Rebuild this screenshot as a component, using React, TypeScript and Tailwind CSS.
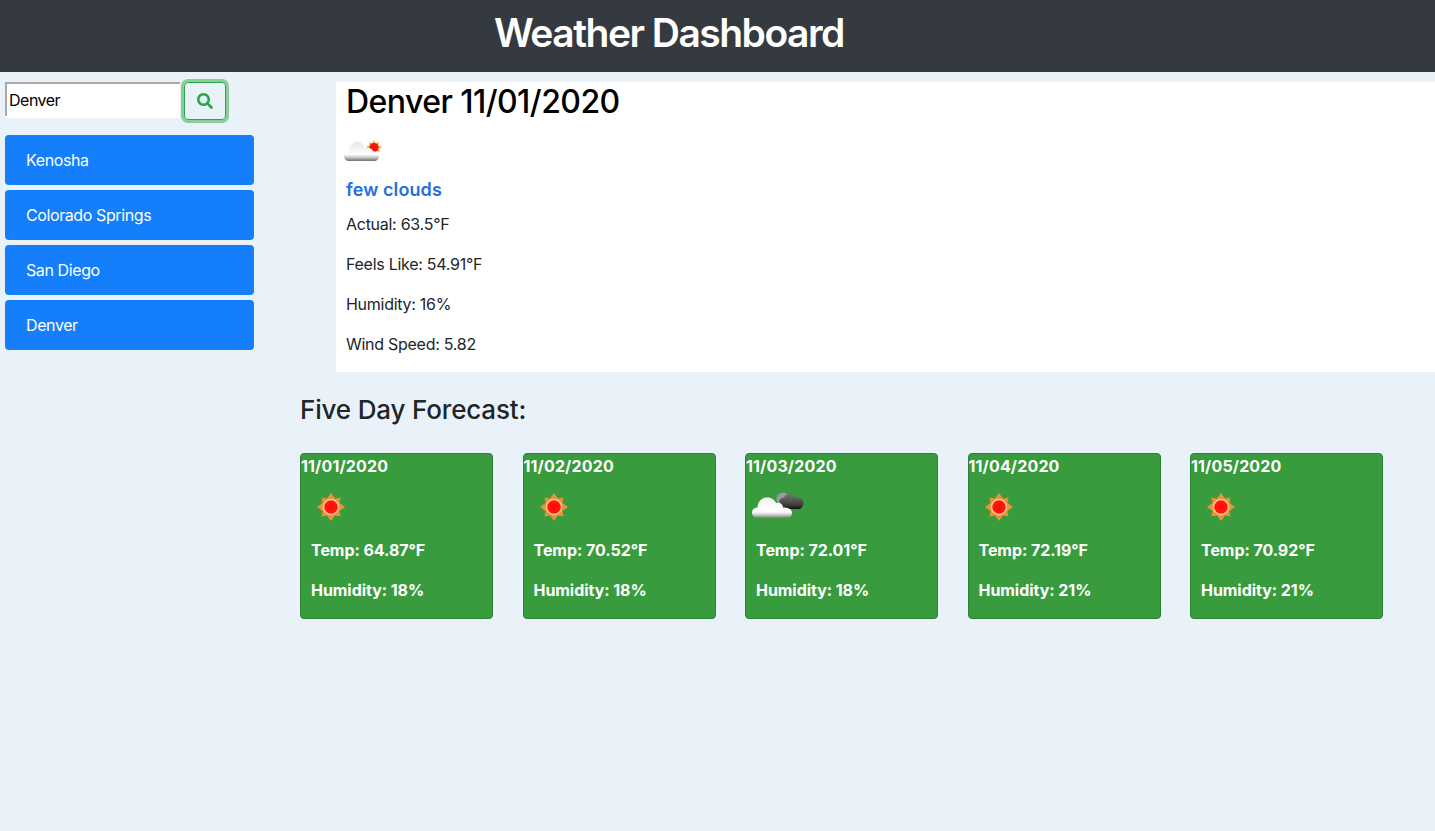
import { FaSearch } from "react-icons/fa";

const cities = ["Kenosha", "Colorado Springs", "San Diego", "Denver"];

const forecast = [
  { date: "11/01/2020", icon: "sun", temp: "64.87", humidity: "18" },
  { date: "11/02/2020", icon: "sun", temp: "70.52", humidity: "18" },
  { date: "11/03/2020", icon: "clouds", temp: "72.01", humidity: "18" },
  { date: "11/04/2020", icon: "sun", temp: "72.19", humidity: "21" },
  { date: "11/05/2020", icon: "sun", temp: "70.92", humidity: "21" },
];

const SunIcon = () => (
  <svg width="30" height="30" viewBox="0 0 30 30">
    <defs>
      <radialGradient id="sun-core" cx="50%" cy="50%" r="50%">
        <stop offset="0%" stopColor="#ff0808" />
        <stop offset="72%" stopColor="#fb1a0c" />
        <stop offset="86%" stopColor="#ffd3a0" />
        <stop offset="100%" stopColor="#f2a04a" />
      </radialGradient>
    </defs>
    <polygon
      fill="#e8923a"
      points="15,1 19,6.500 24.500,5.500 23.500,11 29,15 23.500,19 24.500,24.500 19,23.500 15,29 11,23.500 5.500,24.500 6.500,19 1,15 6.500,11 5.500,5.500 11,6.500"
    />
    <circle cx="15" cy="15" r="8.500" fill="url(#sun-core)" />
  </svg>
);

const FewCloudsIcon = () => (
  <svg width="40" height="28" viewBox="0 0 40 28">
    <defs>
      <linearGradient id="few-cloud" x1="0" y1="0" x2="0" y2="1">
        <stop offset="0%" stopColor="#e6e6e6" />
        <stop offset="65%" stopColor="#ffffff" />
        <stop offset="82%" stopColor="#c4c4c4" />
        <stop offset="100%" stopColor="#6f6f6f" />
      </linearGradient>
    </defs>
    <polygon
      fill="#f79a22"
      points="30,2 31.500,5.500 35,4 34,7.500 38,9 34.500,11 36,14 32,13 30,16 28,13 24,14 25.500,11 22,9 26,7.500 25,4 28.500,5.500"
    />
    <circle cx="30" cy="9.500" r="4.500" fill="#f2170e" />
    <path
      fill="url(#few-cloud)"
      d="M5 23 C1.500 23 0 20.500 0 18 C0 15 2.500 13 5 13 C5.500 8 8.500 4 13 4 C17 4 20 6.500 21.500 10.500 C23 9.500 26 9.500 28 11.500 C29 13 29.500 13.500 30 13.500 C33 13.500 35 16 35 18.500 C35 21 33 23 30 23 Z"
    />
  </svg>
);

const CloudsIcon = () => (
  <svg width="52" height="30" viewBox="0 0 52 30">
    <defs>
      <linearGradient id="dark-cloud" x1="0" y1="0" x2="0" y2="1">
        <stop offset="0%" stopColor="#777777" />
        <stop offset="75%" stopColor="#3b3b3b" />
        <stop offset="100%" stopColor="#111111" />
      </linearGradient>
      <linearGradient id="light-cloud" x1="0" y1="0" x2="0" y2="1">
        <stop offset="0%" stopColor="#f2f2f2" />
        <stop offset="70%" stopColor="#ffffff" />
        <stop offset="86%" stopColor="#c4c4c4" />
        <stop offset="100%" stopColor="#777777" />
      </linearGradient>
    </defs>
    <g transform="translate(0 -5)">
      <circle cx="31" cy="12" r="6.500" fill="#9a9a9a" />
      <path
        fill="url(#dark-cloud)"
        d="M29 19 C26 16 27 11 32 10.500 C34 6 41 5.500 42.500 10 C47 9.500 51.500 12 51.500 15.500 C51.500 19.500 49 22 47 22 L33 22 Z"
      />
    </g>
    <path
      transform="translate(0 -1)"
      fill="url(#light-cloud)"
      d="M6 27 C2 27 0 24.500 0 21.500 C0 18.500 2.500 16.500 5.500 16.500 C6 10 10 6.500 15 6.500 C19 6.500 22.500 8.500 24 12 C25 11.500 26.500 11.500 28 12 C30.500 13 31 15.500 31 16.500 C36 16 40 18 40 22 C40 25 37.500 27 34 27 Z"
    />
  </svg>
);

export default function App() {
  return (
    <div className="min-h-[831px] bg-[#eaf2f9] font-['Inter','Liberation_Sans',sans-serif] text-[16px] text-[#212529]">
      <header className="h-[72px] bg-[#343a40] pl-[494px] pt-[9px]">
        <h1 className="text-[39px] font-semibold leading-[48px] tracking-[-1.5px] text-white">Weather Dashboard</h1>
      </header>

      <div className="flex">
        {/* search and saved cities */}
        <aside className="w-[300px] shrink-0 pl-[5px] pt-[10px]">
          <div className="flex items-start">
            <input
              readOnly
              value="Denver"
              className="h-[34px] w-[175px] border-l-2 border-t-2 border-[#a9a9a9] bg-white pl-[2px] text-[16px] tracking-[-0.5px] text-black shadow-[0_2px_0_0_#ffffff] outline-none"
            />
            <button
              aria-label="Search"
              className="ml-[4px] grid h-[38px] w-[42px] place-items-center rounded-[4px] border border-[#28a745] text-[#28a745] shadow-[0_0_0_3px_rgba(40,167,69,0.5)]"
            >
              <FaSearch size={16} />
            </button>
          </div>
          <ul className="mt-[15px] flex w-[249px] flex-col gap-[5px]">
            {cities.map((city) => (
              <li
                key={city}
                className="flex h-[50px] items-center rounded-[4px] bg-[#147efb] pl-[21px] tracking-[-0.4px] text-white"
              >
                {city}
              </li>
            ))}
          </ul>
        </aside>

        <main className="min-w-0 flex-1">
          {/* current conditions */}
          <section className="ml-[36px] mt-[10px] h-[290px] bg-white pl-[10px] pt-[1px]">
            <h2 className="text-[32px] font-medium leading-[38px] tracking-[-0.55px] text-black">Denver 11/01/2020</h2>
            <div className="ml-[-2px] mt-[17px] h-[40px]">
              <FewCloudsIcon />
            </div>
            <h3 className="text-[18px] font-semibold leading-[24px] tracking-[0.1px] text-[#2470dc]">few clouds</h3>
            <div className="mt-[10px] flex flex-col gap-[16px] leading-[24px] tracking-[-0.27px]">
              <p>Actual: 63.5°F</p>
              <p>Feels Like: 54.91°F</p>
              <p>Humidity: 16%</p>
              <p>Wind Speed: 5.82</p>
            </div>
          </section>

          <h2 className="mt-[23px] text-[26px] font-medium leading-[30px] tracking-[-0.17px]">Five Day Forecast:</h2>

          <div className="mt-[28px] flex gap-[29.500px]">
            {forecast.map((day) => (
              <article
                key={day.date}
                className="h-[166px] w-[193px] rounded-[4px] border border-[#2e8036] bg-[#389c3e] font-bold text-white"
              >
                <div className="leading-[24px] tracking-[0.15px]">{day.date}</div>
                <div className="h-[60px] pl-[6px] pt-[14px]">
                  {day.icon === "sun" ? (
                    <div className="pl-[9px]">
                      <SunIcon />
                    </div>
                  ) : (
                    <CloudsIcon />
                  )}
                </div>
                <div className="flex flex-col gap-[16px] pl-[10px] leading-[24px] tracking-[-0.05px]">
                  <p>Temp: {day.temp}°F</p>
                  <p>Humidity: {day.humidity}%</p>
                </div>
              </article>
            ))}
          </div>
        </main>
      </div>
    </div>
  );
}
